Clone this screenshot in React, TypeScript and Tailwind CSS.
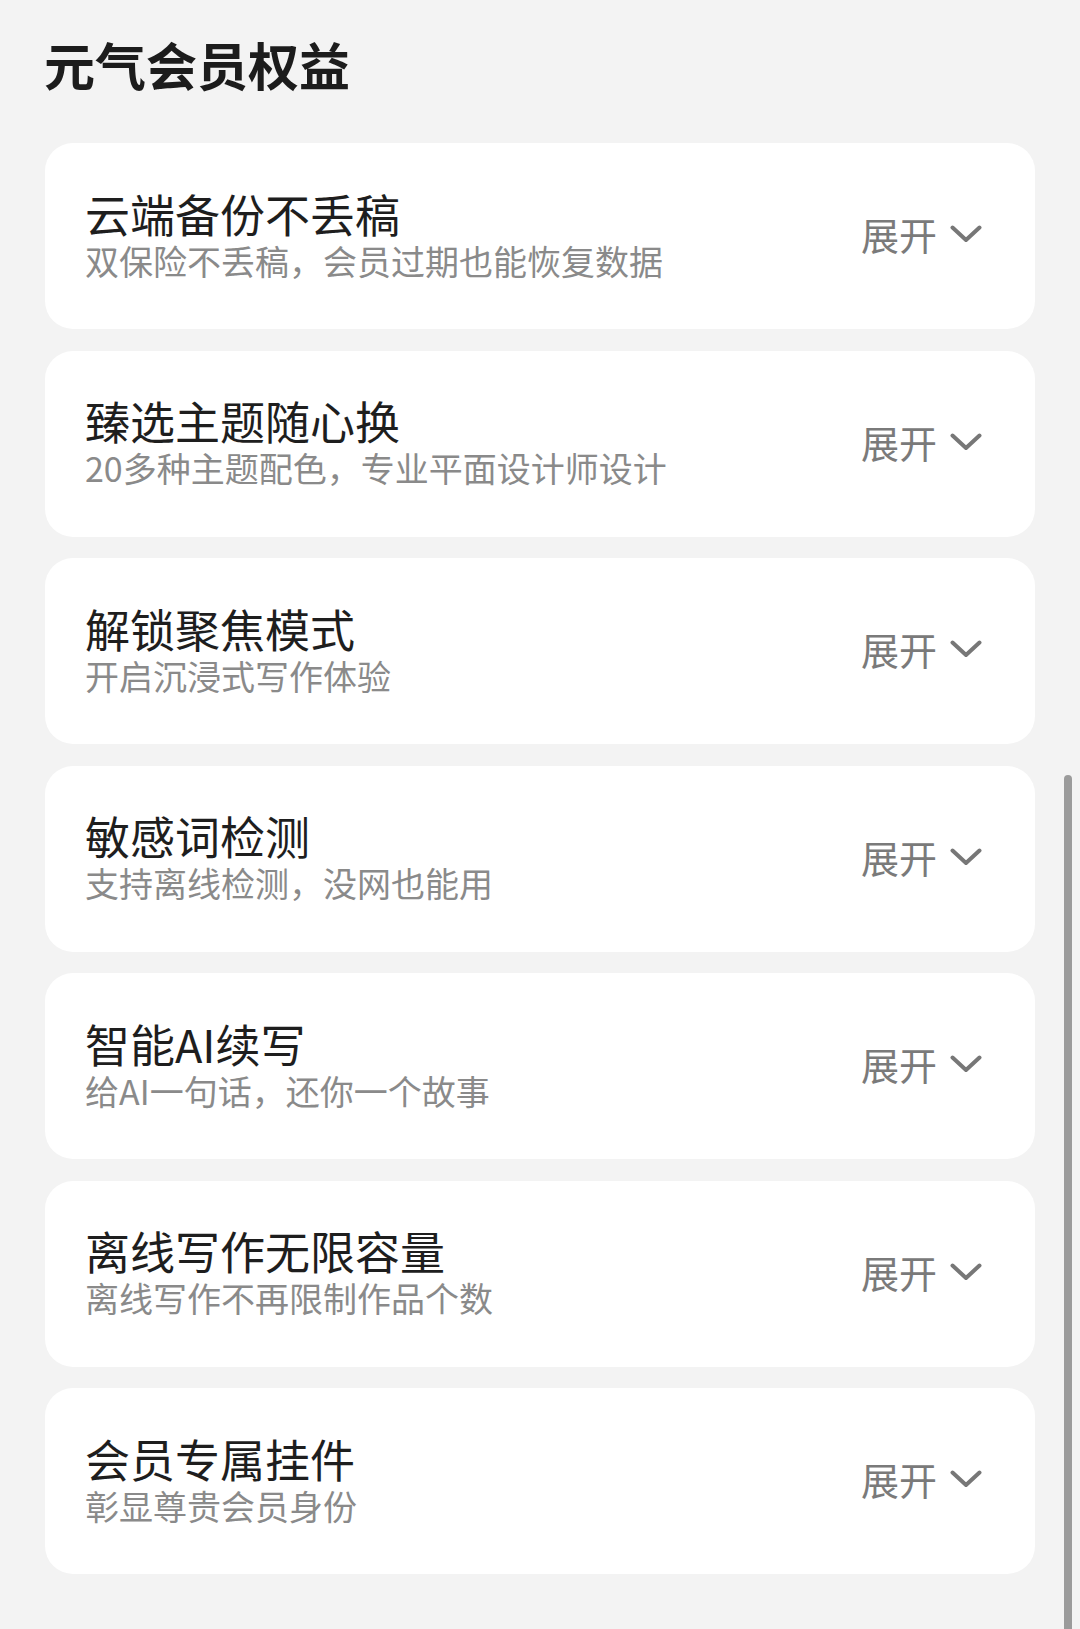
const benefits = [
  { title: "云端备份不丢稿", desc: "双保险不丢稿，会员过期也能恢复数据" },
  { title: "臻选主题随心换", desc: "20多种主题配色，专业平面设计师设计" },
  { title: "解锁聚焦模式", desc: "开启沉浸式写作体验" },
  { title: "敏感词检测", desc: "支持离线检测，没网也能用" },
  { title: "智能AI续写", desc: "给AI一句话，还你一个故事" },
  { title: "离线写作无限容量", desc: "离线写作不再限制作品个数" },
  { title: "会员专属挂件", desc: "彰显尊贵会员身份" },
];

const Chevron = () => (
  <svg width="32" height="18" viewBox="0 0 32 18" fill="none">
    <polyline
      points="2.5,2.5 16,15 29.5,2.5"
      stroke="#777777"
      strokeWidth="4"
      strokeLinecap="round"
      strokeLinejoin="round"
    />
  </svg>
);

const BenefitCard = ({ title, desc }: { title: string; desc: string }) => (
  <div className="flex h-[186px] items-center justify-between rounded-[28px] bg-white pl-[40px] pr-[53px]">
    <div className="flex flex-col self-start pt-[47.5px]">
      <p className="text-[45px] leading-none text-[#1e1e1e]">{title}</p>
      <p className="mt-[8px] text-[34px] leading-none text-[#8a8a8a]">{desc}</p>
    </div>
    <div className="flex items-center gap-[13px] pb-[4px]">
      <span className="text-[38px] leading-none text-[#7a7a7a]">展开</span>
      <Chevron />
    </div>
  </div>
);

export default function App() {
  return (
    <div
      className="relative min-h-[1629px] w-[1080px] overflow-hidden bg-[#f3f3f3] px-[45px] pt-[39px]"
      style={{ fontFamily: '"Noto Sans CJK SC", "Noto Sans", sans-serif' }}
    >
      <h1 className="-ml-[1px] text-[51px] font-bold leading-none text-[#1c1c1c]">元气会员权益</h1>
      <div className="mt-[53px] flex flex-col gap-[21.5px]">
        {benefits.map((b) => (
          <BenefitCard key={b.title} title={b.title} desc={b.desc} />
        ))}
      </div>
      {/* overlay scrollbar */}
      <div className="absolute left-[1064px] top-[775px] h-[900px] w-[8px] rounded-full bg-[#9b9b9b]" />
    </div>
  );
}
